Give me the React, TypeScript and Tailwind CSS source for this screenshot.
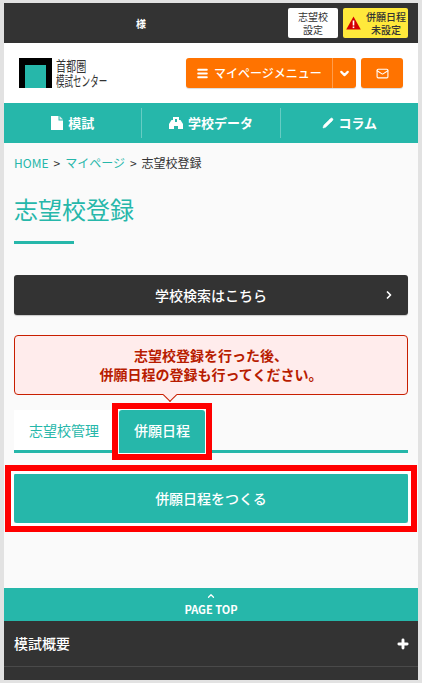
import { ChevronDown, ChevronRight, ChevronUp, Mail, Menu, Pencil, Plus } from "lucide-react";

const FONT = "font-['Noto_Sans_CJK_JP','Noto_Sans',sans-serif]";

function Logo() {
  return (
    <div className="flex items-center gap-[4px]">
      <div className="flex h-[30px] w-[33px] items-end justify-center bg-black">
        <div className="h-[23px] w-[21px] bg-[#26b7aa]" />
      </div>
      <div className="flex w-[52px] flex-col whitespace-nowrap text-[14px] leading-[15px] text-[#333]">
        <span className="origin-left scale-x-[0.72]">首都圏</span>
        <span className="origin-left scale-x-[0.61]">模試センター</span>
      </div>
    </div>
  );
}

function NavItem({ label, icon, border }: { label: string; icon: React.ReactNode; border?: boolean }) {
  return (
    <div className={`flex h-[30px] flex-1 items-center justify-center gap-[5px] text-[13px] font-bold text-white ${border ? "border-l border-white/30" : ""}`}>
      {icon}
      <span>{label}</span>
    </div>
  );
}

export default function App() {
  return (
    <div className={`${FONT} h-[683px] overflow-hidden bg-[#e2e2e2] px-[4px] pb-[3px] pt-[3px]`}>
      <div className="relative flex h-[677px] flex-col bg-[#fafafa]">
        {/* top bar */}
        <div className="flex h-[40px] items-center justify-between bg-[#333] pl-[132px] pr-[10px]">
          <span className="text-[10px] font-bold text-white">様</span>
          <div className="flex gap-[5px]">
            <div className="flex h-[30px] w-[50px] items-center justify-center rounded-[2px] bg-white text-center text-[10px] leading-[13px] text-[#333]">
              志望校
              <br />
              設定
            </div>
            <div className="flex h-[30px] w-[65px] items-center gap-[5px] rounded-[2px] bg-[#ffe93b] pl-[3px] text-center text-[10px] font-medium leading-[13px] text-[#333]">
              <svg width="15" height="14" viewBox="0 0 15 14">
                <path d="M7.5 0.5 L14.8 13.5 H0.2 Z" fill="#d40000" />
                <rect x="6.7" y="4.5" width="1.6" height="5" fill="#fff" />
                <rect x="6.7" y="10.5" width="1.6" height="1.6" fill="#fff" />
              </svg>
              <span>
                併願日程
                <br />
                未設定
              </span>
            </div>
          </div>
        </div>

        {/* header */}
        <div className="flex h-[60px] items-center justify-between bg-white pl-[15px] pr-[15px]">
          <Logo />
          <div className="flex gap-[5px]">
            <div className="flex h-[30px] w-[170px] items-center rounded-[3px] bg-[#ff7300] text-white shadow-[0_1px_1px_rgba(0,0,0,0.15)]">
              <div className="flex flex-1 items-center justify-center gap-[5px] text-[12px] font-medium">
                <Menu size={13} strokeWidth={3.5} />
                <span>マイページメニュー</span>
              </div>
              <div className="flex h-full w-[24px] items-center justify-center border-l border-white/30">
                <ChevronDown size={13} strokeWidth={4} />
              </div>
            </div>
            <div className="flex h-[30px] w-[42px] items-center justify-center rounded-[3px] bg-[#ff7300] text-white shadow-[0_1px_1px_rgba(0,0,0,0.15)]">
              <Mail size={13} strokeWidth={2} />
            </div>
          </div>
        </div>

        {/* nav */}
        <div className="flex h-[40px] items-center bg-[#26b7aa]">
          <NavItem
            label="模試"
            icon={
              <svg width="12" height="14" viewBox="0 0 12 14" fill="#fff">
                <path d="M0 0 H7.5 V4.5 H12 V14 H0 Z" />
                <path d="M8.5 0 L12 3.5 H8.5 Z" fill="#d8f0ec" />
              </svg>
            }
          />
          <NavItem
            label="学校データ"
            border
            icon={
              <svg width="14" height="12" viewBox="0 0 14 12" fill="#fff">
                <path d="M4 0 H10 V3 H11.5 L14 7 V12 H9 V9 H5 V12 H0 V7 L2.5 3 H4 Z" />
                <rect x="6" y="2" width="2" height="3" fill="#26b7aa" />
              </svg>
            }
          />
          <NavItem label="コラム" border icon={<Pencil size={12} fill="#fff" strokeWidth={1} />} />
        </div>

        {/* main */}
        <div className="flex flex-1 flex-col px-[10px]">
          <div className="mt-[12px] flex items-center gap-[5px] text-[12px] leading-[16px] text-[#333]">
            <span className="text-[#26b7aa]">HOME</span>
            <span>&gt;</span>
            <span className="text-[#26b7aa]">マイページ</span>
            <span>&gt;</span>
            <span>志望校登録</span>
          </div>
          <h1 className="mt-[20px] text-[24px] font-normal leading-[36px] text-[#26b7aa]">志望校登録</h1>
          <div className="mt-[14px] h-[3px] w-[60px] bg-[#26b7aa]" />

          <div className="relative mt-[31px] flex h-[40px] items-center justify-center rounded-[3px] bg-[#333] text-[14px] font-medium text-white shadow-[0_1px_1px_rgba(0,0,0,0.2)]">
            学校検索はこちら
            <ChevronRight size={12} strokeWidth={3.5} className="absolute right-[13px]" />
          </div>

          <div className="relative mt-[20px] flex h-[60px] flex-col items-center justify-center rounded-[4px] border border-[#c81e00] bg-[#ffecec] text-center text-[14px] font-bold leading-[19px] text-[#b81c00]">
            <span>志望校登録を行った後、</span>
            <span>併願日程の登録も行ってください。</span>
            <div className="absolute bottom-[-6px] left-[150px] h-[10px] w-[10px] rotate-45 border-b border-r border-[#c81e00] bg-[#ffecec]" />
          </div>

          {/* tabs */}
          <div className="mt-[15px] flex h-[43px] gap-[5px] border-b-[3px] border-[#26b7aa]">
            <div className="flex h-[40px] w-[100px] items-center justify-center bg-white text-[14px] text-[#26b7aa]">志望校管理</div>
            <div className="flex h-[43px] w-[86px] items-center justify-center rounded-t-[3px] bg-[#26b7aa] pb-[3px] text-[14px] font-medium text-white">併願日程</div>
          </div>

          <div className="mt-[20px] flex h-[50px] items-center justify-center rounded-[3px] bg-[#26b7aa] text-[14px] font-medium text-white shadow-[0_2px_1px_rgba(0,0,0,0.12)]">
            併願日程をつくる
          </div>
        </div>

        {/* footer */}
        <div className="flex h-[33px] flex-col items-center bg-[#26b7aa] text-white">
          <ChevronUp size={10} strokeWidth={3} className="mt-[3px]" />
          <span className="mt-[2px] text-[11px] font-bold leading-[12px]">PAGE TOP</span>
        </div>
        <div className="h-[59px] bg-[#333]">
          <div className="flex h-[46px] items-center justify-between border-b border-[#4a4a4a] pl-[10px] pr-[8px] text-[14px] font-medium text-white">
            <span>模試概要</span>
            <Plus size={14} strokeWidth={5} />
          </div>
        </div>

        {/* red annotation boxes */}
        <div className="absolute left-[108px] top-[400px] h-[57px] w-[100px] border-[6px] border-[#f00] outline outline-[1px] -outline-offset-[7px] outline-white" />
        <div className="absolute left-[1px] top-[462px] h-[67px] w-[412px] border-[6px] border-[#f00] outline outline-[3px] -outline-offset-[9px] outline-white" />
      </div>
    </div>
  );
}
